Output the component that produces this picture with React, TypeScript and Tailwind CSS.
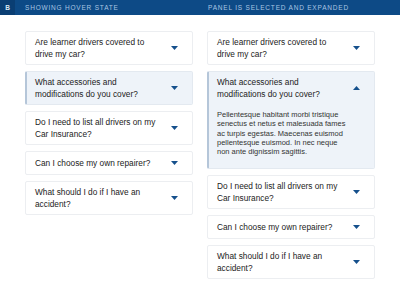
const questions = [
  "Are learner drivers covered to drive my car?",
  "What accessories and modifications do you cover?",
  "Do I need to list all drivers on my Car Insurance?",
  "Can I choose my own repairer?",
  "What should I do if I have an accident?",
];

const body =
  "Pellentesque habitant morbi tristique senectus et netus et malesuada fames ac turpis egestas. Maecenas euismod pellentesque euismod. In nec neque non ante dignissim sagittis.";

const Arrow = ({ up }: { up?: boolean }) => (
  <svg width="7" height="4" viewBox="0 0 7 4" className="shrink-0">
    <path d={up ? "M0 4 L3.5 0 L7 4 Z" : "M0 0 L7 0 L3.5 4 Z"} fill="#15508c" />
  </svg>
);

const Panel = ({
  q,
  active,
  open,
}: {
  q: string;
  active?: boolean;
  open?: boolean;
}) => (
  <div
    className={
      active
        ? "bg-[#eef3f9] border border-[#e3e9f0] border-l-2 border-l-[#b5c6d9] rounded-[2px]"
        : "bg-white border border-[#eceef1] rounded-[2px]"
    }
  >
    <div
      className={
        "flex items-center min-h-[22px] py-[4px] pr-[14px] " +
        (active ? "pl-[8px]" : "pl-[9px]")
      }
    >
      <span className="w-[126px] text-[8.3px] leading-[12px] text-[#222]">{q}</span>
      <span className="flex-1" />
      <Arrow up={open} />
    </div>
    {open && (
      <p className="pl-[8px] pt-[6px] pb-[12px] w-[140px] text-[7.5px] leading-[9.3px] text-[#333]">
        {body}
      </p>
    )}
  </div>
);

export default function App() {
  return (
    <div
      className="w-[400px] h-[300px] bg-white overflow-hidden"
      style={{ fontFamily: '"Liberation Sans", Arial, sans-serif' }}
    >
      <div className="flex h-[15px] bg-[#0d4a86] items-center">
        <div className="w-[15px] h-[15px] bg-[#0a3e73] flex items-center justify-center text-[6.5px] font-bold text-[#dbe7f3]">
          B
        </div>
        <div className="ml-[10px] w-[168px] text-[6.5px] tracking-[0.8px] text-[#a9c5e2] uppercase">
          Showing hover state
        </div>
        <div className="ml-[15px] text-[6.5px] tracking-[0.8px] text-[#a9c5e2] uppercase">
          Panel is selected and expanded
        </div>
      </div>
      <div className="flex gap-[14px] pl-[25px] pt-[16px]">
        <div className="w-[168px] flex flex-col gap-[6px]">
          {questions.map((q, i) => (
            <Panel key={q} q={q} active={i === 1} />
          ))}
        </div>
        <div className="w-[168px] flex flex-col gap-[6px]">
          {questions.map((q, i) => (
            <Panel key={q} q={q} active={i === 1} open={i === 1} />
          ))}
        </div>
      </div>
    </div>
  );
}
